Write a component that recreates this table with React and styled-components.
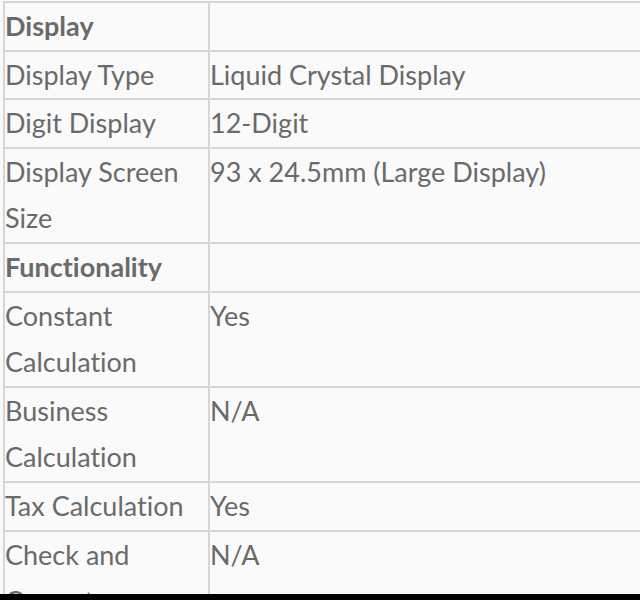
import React from "react";
import styled, { createGlobalStyle } from "styled-components";

const Global = createGlobalStyle`
  html, body { margin: 0; padding: 0; background: #fafafa; }
  body { overflow: hidden; }
`;

const Screen = styled.div`
  width: 640px;
  height: 600px;
  display: flex;
  flex-direction: column;
  background: #fafafa;
`;

const Viewport = styled.div`
  flex: 1;
  overflow: hidden;
  padding: 1px 0 0 3px;
`;

const NavBar = styled.div`
  height: 6px;
  background: #000;
  flex-shrink: 0;
`;

const Table = styled.table`
  border-collapse: collapse;
  width: 760px;
  table-layout: fixed;
  font-family: Lato, "Liberation Sans", sans-serif;
  font-size: 27px;
  line-height: 46.6px;
  color: #6a6a6a;
  font-variant-ligatures: none;
`;

const Cell = styled.td`
  border: 2px solid #d6d6d6;
  padding: 0;
  vertical-align: top;
  font-weight: ${(p) => (p.$head ? 700 : 400)};
  width: ${(p) => (p.$label ? "203px" : "auto")};
`;

const rows = [
  ["Display", "", true],
  ["Display Type", "Liquid Crystal Display"],
  ["Digit Display", "12-Digit"],
  ["Display Screen Size", "93 x 24.5mm (Large Display)"],
  ["Functionality", "", true],
  ["Constant Calculation", "Yes"],
  ["Business Calculation", "N/A"],
  ["Tax Calculation", "Yes"],
  ["Check and Correct", "N/A"],
];

export default function App() {
  return (
    <>
      <Global />
      <Screen>
        <Viewport>
          <Table>
            <tbody>
              {rows.map(([a, b, head], i) => (
                <tr key={i}>
                  <Cell $label $head={head}>{a}</Cell>
                  <Cell>{b}</Cell>
                </tr>
              ))}
            </tbody>
          </Table>
        </Viewport>
        <NavBar />
      </Screen>
    </>
  );
}
